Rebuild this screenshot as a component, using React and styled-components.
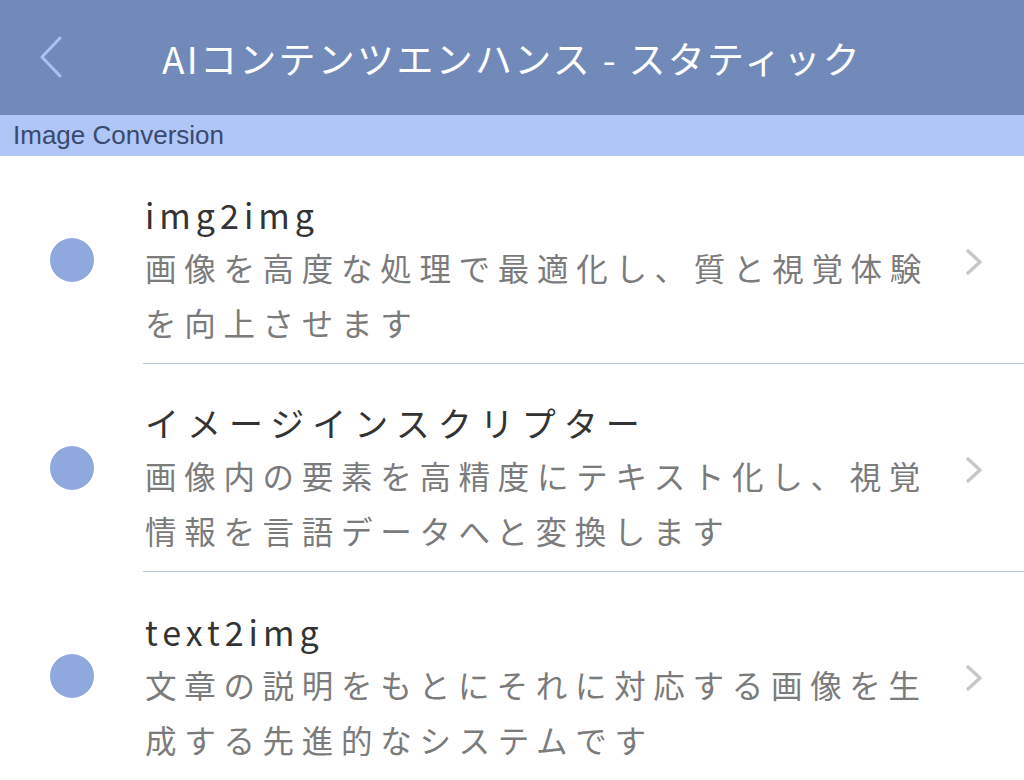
import styled, { createGlobalStyle } from "styled-components"

const GlobalStyle = createGlobalStyle`
  html, body {
    margin: 0;
    padding: 0;
    background: #ffffff;
    overflow: hidden;
  }
  body {
    font-family: "Noto Sans CJK JP", "Noto Sans", sans-serif;
  }
`

const Page = styled.div`
  width: 1024px;
  height: 780px;
  display: flex;
  flex-direction: column;
  overflow: hidden;
`

const NavBar = styled.div`
  height: 115px;
  flex-shrink: 0;
  background: #728aba;
  display: flex;
  align-items: center;
  justify-content: center;
  position: relative;
`

const BackButton = styled.div`
  position: absolute;
  left: 38px;
  top: 36px;
  width: 28px;
  height: 42px;
  display: flex;
`

const NavTitle = styled.div`
  color: #ffffff;
  font-size: 37px;
  letter-spacing: 2.3px;
  font-weight: 400;
`

const SectionBar = styled.div`
  height: 41px;
  flex-shrink: 0;
  background: #afc6f7;
  display: flex;
  align-items: center;
  padding-left: 13px;
  font-family: "Liberation Sans", Arial, sans-serif;
  font-size: 26px;
  color: #3a4a6e;
`

const Row = styled.div`
  height: 208px;
  flex-shrink: 0;
  display: flex;
`

const DotCell = styled.div`
  width: 143px;
  flex-shrink: 0;
  display: flex;
  align-items: center;
  padding-left: 50px;
  box-sizing: border-box;
`

const Dot = styled.div`
  width: 44px;
  height: 44px;
  border-radius: 50%;
  background: #8fa8de;
`

const Body = styled.div`
  flex: 1;
  display: flex;
  align-items: center;
  border-bottom: ${(p) => (p.$last ? "none" : "1px solid #b9c8d6")};
  padding-right: 40px;
`

const TextBlock = styled.div`
  width: 795px;
  padding-left: 2px;
  padding-top: 24px;
`

const Title = styled.div`
  font-size: 34px;
  line-height: 44px;
  letter-spacing: ${(p) => p.$spacing}px;
  color: #333333;
  margin-bottom: 3px;
`

const Desc = styled.div`
  font-size: 31.5px;
  line-height: 55px;
  letter-spacing: 7.7px;
  color: #7b7b7b;
`

const Chevron = styled.div`
  margin-left: auto;
  display: flex;
  margin-top: 4px;
`

const items = [
  {
    title: "img2img",
    spacing: 5,
    desc: "画像を高度な処理で最適化し、質と視覚体験を向上させます",
  },
  {
    title: "イメージインスクリプター",
    spacing: 8,
    desc: "画像内の要素を高精度にテキスト化し、視覚情報を言語データへと変換します",
  },
  {
    title: "text2img",
    spacing: 5,
    desc: "文章の説明をもとにそれに対応する画像を生成する先進的なシステムです",
  },
]

export default function App() {
  return (
    <Page>
      <GlobalStyle />
      <NavBar>
        <BackButton>
          <svg width="28" height="42" viewBox="0 0 28 42">
            <polyline
              points="22,2 4,21 22,40"
              fill="none"
              stroke="#a9c2f5"
              strokeWidth="3"
              strokeLinecap="round"
              strokeLinejoin="round"
            />
          </svg>
        </BackButton>
        <NavTitle>AIコンテンツエンハンス - スタティック</NavTitle>
      </NavBar>
      <SectionBar>Image Conversion</SectionBar>
      {items.map((item, i) => (
        <Row key={i}>
          <DotCell>
            <Dot />
          </DotCell>
          <Body $last={i === items.length - 1}>
            <TextBlock>
              <Title $spacing={item.spacing}>{item.title}</Title>
              <Desc>{item.desc}</Desc>
            </TextBlock>
            <Chevron>
              <svg width="20" height="28" viewBox="0 0 20 28">
                <polyline
                  points="4,3 16,14 4,25"
                  fill="none"
                  stroke="#c7c7cc"
                  strokeWidth="3.5"
                  strokeLinecap="round"
                  strokeLinejoin="round"
                />
              </svg>
            </Chevron>
          </Body>
        </Row>
      ))}
    </Page>
  )
}
